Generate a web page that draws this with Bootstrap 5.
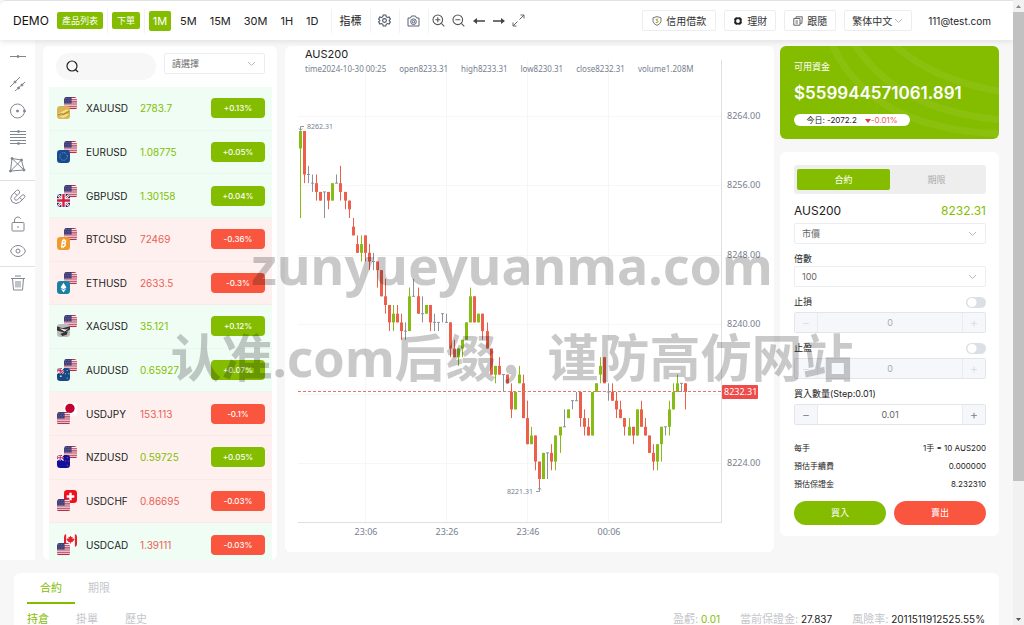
<!DOCTYPE html>
<html lang="zh-Hant">
<head>
<meta charset="utf-8">
<meta name="viewport" content="width=device-width, initial-scale=1">
<title>DEMO</title>
<link href="https://cdn.jsdelivr.net/npm/bootstrap@5.3.0/dist/css/bootstrap.min.css" rel="stylesheet">
<style>
  :root { --up:#84bd00; --down:#f9553f; --muted:#a9abb0; --rule:#ebedf0; }
  body { font-family:Inter,"Noto Sans CJK TC",sans-serif; font-size:10px; line-height:16px; color:#222; background:#f7f7f7; }
  button { font-family:inherit; }
  svg { flex:none; }
  .c-up { color:var(--up); } .c-down { color:#ea6153; } .c-muted { color:#c4c6ca; }
  .bg-up { background:var(--up); } .bg-down { background:var(--down); }
  .page-view { min-width:0; border-top:1px solid #e2e2e2; border-top-left-radius:6px; }
  .scroll-track { width:11px; background:#f1f1f1; }
  .scroll-thumb { height:75%; background:#c1c1c1; }
  .topbar { height:39px; background:#fff; box-shadow:0 1px 6px #dedede; padding:0 22px 0 13px; }
  .brand-name { font-size:12px; color:#111; width:44px; }
  .tag-btn { background:var(--up); color:#fff; border:0; border-radius:2px; height:17px; line-height:17px; padding:0 5px; font-size:9px; }
  .sep { width:1px; height:24px; background:#f1f2f4; margin:0 4px; }
  .tf { border:0; background:none; font-size:11px; padding:0 4px; height:20px; color:#222; text-align:center; }
  .tf.on { background:var(--up); color:#fff; border-radius:2px; width:22px; }
  .frames { gap:5px; margin-left:5px; }
  .icon-btn { border:0; background:none; padding:0; width:20px; height:20px; display:flex; align-items:center; justify-content:center; color:#555; }
  .out-btn { border:1px solid var(--rule); border-radius:2px; background:#fff; height:21px; padding:0 9px; font-size:10px; display:flex; align-items:center; gap:4px; color:#333; white-space:nowrap; }
  .sel { appearance:none; border:1px solid var(--rule); border-radius:2px; background:#fff url("data:image/svg+xml,%3Csvg xmlns='http://www.w3.org/2000/svg' width='9' height='6'%3E%3Cpath d='M1 1l3.5 3.5L8 1' fill='none' stroke='%23b5b8be'/%3E%3C/svg%3E") no-repeat right 8px center; height:21px; padding:0 20px 0 7px; font-size:9px; color:#666; width:100%; }
  .topbar .sel { width:68px; font-size:10px; color:#333; padding:0 14px 0 7px; }
  .tools { width:35px; background:#fff; color:#80868f; padding-top:3px; }
  .tools .icon-btn { width:35px; height:27px; color:inherit; }
  .tools hr { width:100%; margin:2px 0; border-color:#dfe1e5; opacity:1; }
  .work { height:520px; }
  .panel { background:#fff; border-radius:6px; }
  .list-panel { width:234px; margin:6px 8px 0; overflow:hidden; padding:7px 5px 0 6px; }
  .list-tools { padding:0 3px 0 7px; }
  .search { width:100px; height:27px; border-radius:14px; background:#f7f7f7; padding-left:10px; }
  .search input { border:0; background:none; width:60px; outline:0; }
  .pairs { display:grid; grid-auto-rows:1fr; height:480px; margin-top:7px; }
  .pair { display:grid; grid-template-columns:29px 54px 1fr 54px; align-items:center; padding:0 7px 0 8px; border-bottom:1px solid rgba(0,0,0,.025); color:#222; text-decoration:none; }
  .pair.rise { background:#effdf5; } .pair.fall { background:#fff0f0; }
  .chg { color:#fff; border-radius:4px; height:20px; line-height:20px; font-size:8px; text-align:center; font-weight:500; }
  .chart-panel { min-width:0; margin:6px 6px 0 0; height:506px; }
  .chart-name { font-size:11px; left:20px; top:0; color:#222; }
  .ohlc { left:20px; top:15px; font:8px/16px "Noto Sans",sans-serif; color:#76808f; gap:13px; white-space:nowrap; }
  .plot text { font-family:"Noto Sans",sans-serif; fill:#76808f; }
  .side { width:219px; margin:6px 14px 0 0; }
  .funds { height:93px; background:var(--up); color:#fff; border-radius:6px; overflow:hidden; padding:12px 14px; }
  .balance { font-size:17px; line-height:20px; font-weight:600; margin-top:12px; }
  .today { height:12px; line-height:12px; width:116px; border-radius:6px; font-size:8px; background:#fff; color:#222; margin-top:11px; justify-content:center; }
  .order { margin-top:13px; padding:13px 13px 13px 14px; height:384px; }
  .seg { height:29px; background:#eee; border-radius:3px; padding:4px 3px; }
  .seg button { border:0; background:none; color:#aaa; flex:1; border-radius:2px; font-size:9px; padding:0; }
  .seg .on { background:var(--up); color:#fff; }
  .quote-line { font-size:12px; line-height:16px; margin:9px 0 4px; }
  .field-label { font-size:9px; line-height:14px; display:block; }
  .stepper { height:21px; border:1px solid #e2e5ea; border-radius:2px; background:#fff; overflow:hidden; margin-top:3px; }
  .stepper button { width:22px; border:0; background:#f5f7fa; color:#888c94; padding:0; font-size:12px; line-height:18px; }
  .stepper input { border:0; border-left:1px solid #e8ebf0; border-right:1px solid #e8ebf0; border-radius:0; flex:1; min-width:0; text-align:center; font-size:9px; color:#666; background:#fff; padding:0; }
  .stepper.off input { background:#f5f7fa; color:#a8abb2; } .stepper.off button { color:#dcdfe6; }
  .toggle { appearance:none; width:20px; height:11px; border-radius:6px; margin:0; background:#dcdfe6 radial-gradient(circle at 6px 50%,#fff 4px,transparent 5px); }
  .facts { font-size:8px; line-height:14px; }
  .acts { margin-top:10px; }
  .act { border:0; border-radius:12px; height:24px; color:#fff; flex:1; font-size:9px; padding:0; }
  .bottom { margin:13px 14px 0; padding:4px 14px 0 13px; height:120px; font-size:11px; line-height:14px; }
  .bottom a { text-decoration:none; }
  .main-tab { width:48px; height:27px; line-height:22px; text-align:center; }
  .main-tab.on { border-bottom:2px solid var(--up); }
  .sub-tab { width:49px; }
  .stats { font-size:10px; gap:20px; }
  .stats .c-muted { font-size:11px; }
  .wm { inset:0; top:219px; pointer-events:none; color:rgba(0,0,0,.21); font:bold 52px/92px "Noto Sans","Noto Sans CJK SC",sans-serif; text-align:center; white-space:nowrap; overflow:hidden; }
  .wm-zh { font-size:51px; }
</style>
</head>
<body class="vh-100 overflow-hidden">
<svg width="0" height="0" class="position-absolute" aria-hidden="true">
  <defs>
    <clipPath id="r"><rect width="12" height="12" rx="3"/></clipPath>
    <symbol id="us" viewBox="0 0 12 12"><g clip-path="url(#r)"><path fill="#f4eef0" d="M0 0h12v12H0z"/><path stroke="#b5304c" d="M0 .5h12M0 2.5h12M0 4.5h12M0 6.5h12M0 8.5h12M0 10.5h12"/><path fill="#3b3b78" d="M0 0h7v6H0z"/><path stroke="#aab" stroke-width=".5" stroke-dasharray=".6 .9" d="M.7 1.3h6M1.2 3h5.5M.7 4.7h6"/></g></symbol>
    <symbol id="xau" viewBox="0 0 12 12"><g clip-path="url(#r)"><path fill="#d9b553" d="M0 0h12v12H0z"/><path fill="#f3dc8a" d="M1 7l8-4 2 1-8 4zM2 10l7-3 2 1-5 3z"/><path fill="none" stroke="#8e6516" stroke-width=".7" d="M1 8l3-1 2 1 5-3"/></g></symbol>
    <symbol id="xag" viewBox="0 0 12 12"><g clip-path="url(#r)"><path fill="#bbb" d="M0 0h12v12H0z"/><path fill="#333" d="M0 2l5 2 7-2v3L7 8 0 6zM3 9l7-2-1 3-4 1z"/><path fill="#eee" d="M2 4l6 1 3-1-4 3z"/></g></symbol>
    <symbol id="eur" viewBox="0 0 12 12"><rect width="12" height="12" rx="3" fill="#174a94"/><circle cx="6" cy="6" r="3.5" fill="none" stroke="#a9b970" stroke-width=".8" stroke-dasharray=".8 1.03"/></symbol>
    <symbol id="gbp" viewBox="0 0 12 12"><g clip-path="url(#r)"><path fill="#1e2a78" d="M0 0h12v12H0z"/><path stroke="#fff" stroke-width="2" d="M0 0l12 12M12 0L0 12"/><path stroke="#d0213c" stroke-width=".7" d="M0 0l12 12M12 0L0 12"/><path stroke="#fff" stroke-width="4" d="M6 0v12M0 6h12"/><path stroke="#d0213c" stroke-width="2.2" d="M6 0v12M0 6h12"/></g></symbol>
    <symbol id="btc" viewBox="0 0 12 12"><rect width="12" height="12" rx="3" fill="#f19a2c"/><path fill="none" stroke="#fff" stroke-width="1.3" d="M5 3.200h1.800q1.400.2 1.100 1.300-.3 1.300-1.700 1.300H4.700h1.900q1.300.3 1 1.500Q7.300 8.800 5.900 8.800H3.800M5.300 3.200L4.200 8.800"/><path stroke="#fff" stroke-width=".8" d="M5.900 1.700l-.2 1.300M7.200 1.900L7 3.200M4.500 9l-.2 1.300M5.900 9l-.2 1.300"/></symbol>
    <symbol id="eth" viewBox="0 0 12 12"><rect width="12" height="12" rx="3" fill="#1c7fa6"/><path fill="#fff" d="M6 1.500L8.700 6 6 7.600 3.300 6zM3.300 6.800L6 8.400l2.700-1.600L6 10.500z"/></symbol>
    <symbol id="aud" viewBox="0 0 12 12"><g clip-path="url(#r)"><path fill="#164a85" d="M0 0h12v12H0z"/><path stroke="#fff" stroke-width="1.400" d="M0 0l6 5M6 0L0 5M3 0v5M0 2.500h6"/><path stroke="#d0213c" stroke-width=".9" d="M3 0v5M0 2.500h6M0 0l6 5"/><path fill="#fff" d="M3 7h1.200v1.200H3zM9 2h.8v.8H9zM10.500 5h.8v.8h-.8zM7.500 5h.8v.8h-.8zM9 9h.8v.8H9z"/></g></symbol>
    <symbol id="nzd" viewBox="0 0 12 12"><g clip-path="url(#r)"><path fill="#10109a" d="M0 0h12v12H0z"/><path stroke="#fff" stroke-width="1.200" d="M0 0l6 5M6 0L0 5M3 0v5M0 2.500h6"/><path stroke="#e0213c" stroke-width=".9" d="M3 0v5M0 2.500h6"/><path fill="#e44" d="M9 2h1v1H9zM10.500 5h1v1h-1zM7.500 5h1v1h-1zM9 9h1v1H9z"/></g></symbol>
    <symbol id="jpy" viewBox="0 0 12 12"><rect width="12" height="12" rx="3" fill="#fff"/><circle cx="5.500" cy="5" r="4.300" fill="#c3002f"/></symbol>
    <symbol id="chf" viewBox="0 0 12 12"><rect width="12" height="12" rx="3" fill="#f00f1c"/><path stroke="#fff" stroke-width="2.200" d="M6 2.500v7M2.500 6h7"/></symbol>
    <symbol id="cad" viewBox="0 0 12 12"><g clip-path="url(#r)"><path fill="#fff" d="M0 0h12v12H0z"/><path fill="#e8202a" d="M0 0h2v12H0zM10 0h2v12h-2zM6 1.500l1 1.500 1-.4-.3 2L9 4l.6 1.300L7.500 7.500H6.300V9h-.6V7.500H4.500L2.400 5.300 3 4l1.300.6-.3-2 1 .4z"/></g></symbol>
  </defs>
</svg>
<div class="d-flex h-100">
<div class="page-view flex-grow-1 overflow-hidden">
  <header class="topbar d-flex align-items-center position-relative">
    <span class="brand-name">DEMO</span>
    <button class="tag-btn">產品列表</button><span class="sep"></span>
    <button class="tag-btn">下單</button><span class="sep"></span>
    <button class="tf on p-0">1M</button>
    <div class="frames d-flex">
      <button class="tf">5M</button>
      <button class="tf">15M</button>
      <button class="tf">30M</button>
      <button class="tf">1H</button>
      <button class="tf">1D</button>
    </div>
    <span class="sep ms-2"></span>
    <button class="tf">指標</button><span class="sep ms-1 me-0"></span>
    <button class="icon-btn ms-1" aria-label="設置"><svg width="13" height="13" viewBox="0 0 13 13" fill="none" stroke="#4c5566" stroke-width="1.100"><path d="M5.200 1h2.600l.4 1.600 1.300.8 1.600-.5 1.300 2.200-1.200 1.100v.6l1.200 1.100-1.300 2.200-1.600-.5-1.300.8-.4 1.600H5.200l-.4-1.600-1.300-.8-1.600.5L.6 7.900l1.200-1.100v-.6L.6 5.100l1.300-2.200 1.600.5 1.300-.8z"/><circle cx="6.500" cy="6.500" r="1.900"/></svg></button>
    <span class="sep ms-1"></span>
    <button class="icon-btn" aria-label="截圖"><svg width="13" height="12" viewBox="0 0 13 12" fill="none" stroke="#566176"><path d="M1 3h2.500L4.500 1h4l1 2H12v8H1z"/><circle cx="6.500" cy="6.700" r="2.800"/><circle cx="6.500" cy="6.700" r="1.200"/></svg></button>
    <span class="sep me-0"></span>
    <button class="icon-btn" aria-label="放大"><svg width="13" height="13" viewBox="0 0 13 13" fill="none" stroke="#555" stroke-width="1.100"><circle cx="5.800" cy="5.800" r="4.800"/><path d="M9.300 9.300l3 3M3.300 5.800h5M5.800 3.300v5"/></svg></button>
    <button class="icon-btn" aria-label="縮小"><svg width="13" height="13" viewBox="0 0 13 13" fill="none" stroke="#555" stroke-width="1.100"><circle cx="5.800" cy="5.800" r="4.800"/><path d="M9.300 9.300l3 3M3.300 5.800h5"/></svg></button>
    <button class="icon-btn" aria-label="向左"><svg width="12" height="8" viewBox="0 0 12 8"><path fill="#444" d="M0 4l4-3v2.300h8v1.400H4V7z"/></svg></button>
    <button class="icon-btn" aria-label="向右"><svg width="12" height="8" viewBox="0 0 12 8"><path fill="#444" d="M12 4L8 1v2.300H0v1.400h8V7z"/></svg></button>
    <button class="icon-btn" aria-label="全屏"><svg width="13" height="13" viewBox="0 0 13 13" fill="none" stroke="#666"><path d="M8.500 1H12v3.500M12 1L7.500 5.500M4.500 12H1V8.500M1 12l4.500-4.500"/></svg></button>
    <div class="d-flex align-items-center ms-auto gap-2">
      <button class="out-btn"><svg width="10" height="10" viewBox="0 0 10 10" fill="none" stroke="#777"><path d="M5 .6l4 1.200v3.500Q8.500 8 5 9.400 1.500 8 1 5.300V1.800z"/><path stroke="#b5a12d" d="M6.300 3.200Q4 2.500 4 4q2.500.8 2.200 2-.8 1-2.500.4"/></svg>信用借款</button>
      <button class="out-btn px-2"><svg width="10" height="10" viewBox="0 0 10 10"><circle cx="5" cy="5" r="3" fill="none" stroke="#222" stroke-width="2.200"/><path stroke="#fff" d="M5 0v2M5 8v2M0 5h2M8 5h2" stroke-width=".7"/></svg>理財</button>
      <button class="out-btn px-2"><svg width="10" height="10" viewBox="0 0 10 10" fill="none" stroke="#666"><path d="M3 2.500V.8h6.300l-.5 6.500H7M.8 2.500H7v6.700H.8zM2.500 5H5M2.500 7H5"/></svg>跟隨</button>
      <select class="sel" aria-label="語言"><option>繁体中文</option></select>
      <a href="#" class="text-dark text-decoration-none ms-2">111@test.com</a>
    </div>
  </header>

  <div class="work d-flex align-items-start">
    <nav class="tools h-100 d-flex flex-column" aria-label="繪圖工具">
      <button class="icon-btn" aria-label="水平線"><svg width="16" height="16" viewBox="0 0 16 16" stroke="currentColor"><path d="M0 7.500h16"/><circle cx="8" cy="7.500" r="1" fill="currentColor"/></svg></button>
      <button class="icon-btn" aria-label="平行線"><svg width="16" height="16" viewBox="0 0 16 16" stroke="currentColor" fill="currentColor"><path d="M0 11L10 1M5 15L15 6"/><circle cx="5" cy="6" r="1"/><circle cx="8.500" cy="12" r="1"/><circle cx="12" cy="9" r="1"/></svg></button>
      <button class="icon-btn" aria-label="圓形"><svg width="16" height="16" viewBox="0 0 16 16" stroke="currentColor" fill="none"><circle cx="7.500" cy="8" r="7"/><circle cx="7.500" cy="8" r="1" fill="currentColor"/><circle cx="14.500" cy="8" r="1" fill="currentColor"/></svg></button>
      <button class="icon-btn" aria-label="斐波那契"><svg width="16" height="16" viewBox="0 0 16 16" stroke="currentColor" fill="currentColor"><path d="M0 1.500h16M0 4.500h16M0 7.500h16M0 10.500h16M0 13.500h16"/><circle cx="8.500" cy="1.500" r="1"/><circle cx="8.500" cy="13.500" r="1"/></svg></button>
      <button class="icon-btn" aria-label="形態"><svg width="17" height="16" viewBox="0 0 17 16" stroke="currentColor" fill="none"><path d="M3 1.500L1.500 14 15 13 12.500 3zM3 1.500L15 13M12.500 3L1.500 14"/><g fill="currentColor"><circle cx="3" cy="1.500" r="1"/><circle cx="1.500" cy="14" r="1"/><circle cx="15" cy="13" r="1"/><circle cx="12.500" cy="3" r="1"/></g></svg></button>
      <hr>
      <button class="icon-btn" aria-label="磁吸"><svg width="16" height="16" viewBox="0 0 16 16" stroke="currentColor" fill="none"><path d="M6.500 1.500L2 6Q-.8 9.500 2.200 13 6 16 9.500 13.300L14.500 8.500Q15.500 7 14.300 6.200 13.200 5.300 12 6.300L7.500 10.700Q6 11.700 5 10.800 4 9.700 5 8.500L9.500 4Q10 2.500 9 1.500 7.700.5 6.500 1.500zM4.300 3.800l2.700 2.500M9.800 8.500l2.300 2.300"/></svg></button>
      <button class="icon-btn" aria-label="鎖定"><svg width="14" height="16" viewBox="0 0 14 16" stroke="currentColor" fill="none"><rect x="1" y="6.500" width="12" height="8.500" rx="1"/><path d="M3.500 6.500V4Q4 1 6.800 1q2 0 3 1.700M7 10v2"/></svg></button>
      <button class="icon-btn" aria-label="顯示"><svg width="16" height="14" viewBox="0 0 16 14" stroke="currentColor" fill="none"><path d="M.5 7Q3 1.500 8 1.500T15.500 7Q13 12.500 8 12.500T.5 7z"/><circle cx="8" cy="7" r="2"/></svg></button>
      <hr>
      <button class="icon-btn" aria-label="刪除"><svg width="16" height="16" viewBox="0 0 16 16" stroke="currentColor" fill="none"><path d="M1 3.500h14M5 1h6M2.500 3.500L3.500 15h9l1-11.500M6 6v6.500M8 6v6.500M10 6v6.500"/></svg></button>
    </nav>

    <section class="panel list-panel align-self-stretch flex-shrink-0">
      <div class="list-tools d-flex align-items-start">
        <label class="search d-flex align-items-center"><svg width="13" height="13" viewBox="0 0 13 13" fill="none" stroke="#222" stroke-width="1.200"><circle cx="6" cy="6" r="5"/><path d="M9.500 9.500l2.500 2.500"/></svg><input type="text" aria-label="搜索"></label>
        <div class="flex-grow-1 ps-2 pe-1"><select class="sel c-muted" aria-label="分類"><option>請選擇</option></select></div>
      </div>
      <div class="pairs" id="pairs"></div>
    </section>

    <section class="panel chart-panel flex-grow-1 position-relative">
      <div class="position-absolute chart-name">AUS200</div>
      <div class="position-absolute ohlc d-flex"><span>time2024-10-30 00:25</span><span>open8233.31</span><span>high8233.31</span><span>low8230.31</span><span>close8232.31</span><span>volume1.208M</span></div>
      <svg class="plot w-100 d-block" viewBox="0 0 489 506" id="plot"></svg>
    </section>

    <aside class="side flex-shrink-0">
      <div class="funds position-relative">
        <svg class="position-absolute top-0 end-0" width="180" height="93" viewBox="0 0 180 93" fill="none" stroke="#fff" stroke-opacity=".06" stroke-width="7"><path d="M12-4Q50 84 184 88M33-6Q76 66 186 74M68-8Q110 35 186 46"/></svg>
        <div class="position-relative">
          <div class="field-label mt-1 lh-1">可用資金</div>
          <div class="balance">$559944571061.891</div>
          <div class="today d-flex gap-2"><span>今日: -2072.2</span><span class="c-down"><svg width="6" height="4" viewBox="0 0 6 4"><path fill="#e23b3b" d="M0 0h6L3 4z"/></svg>-0.01%</span></div>
        </div>
      </div>
      <form class="panel order">
        <div class="seg d-flex"><button type="button" class="on">合約</button><button type="button">期限</button></div>
        <div class="quote-line d-flex justify-content-between"><span>AUS200</span><span class="c-up">8232.31</span></div>
        <select class="sel" aria-label="類型"><option>市價</option></select>
        <label class="field-label mt-1 pt-1" for="lev">倍數</label>
        <select class="sel" id="lev"><option>100</option></select>
        <div class="d-flex justify-content-between align-items-center mt-2"><label class="field-label" for="sl">止損</label><input type="checkbox" class="toggle" id="sl"></div>
        <div class="stepper off d-flex"><button type="button" disabled>−</button><input type="text" value="0" disabled aria-label="止損價"><button type="button" disabled>+</button></div>
        <div class="d-flex justify-content-between align-items-center mt-2"><label class="field-label" for="tp">止盈</label><input type="checkbox" class="toggle" id="tp"></div>
        <div class="stepper off d-flex"><button type="button" disabled>−</button><input type="text" value="0" disabled aria-label="止盈價"><button type="button" disabled>+</button></div>
        <label class="field-label mt-2" for="qty">買入數量(Step:0.01)</label>
        <div class="stepper d-flex"><button type="button">−</button><input type="text" value="0.01" id="qty"><button type="button">+</button></div>
        <div class="facts d-grid gap-1 mt-3">
          <div class="d-flex justify-content-between"><span>每手</span><span>1手 = 10 AUS200</span></div>
          <div class="d-flex justify-content-between"><span>預估手續費</span><span>0.000000</span></div>
          <div class="d-flex justify-content-between"><span>預估保證金</span><span>8.232310</span></div>
        </div>
        <div class="acts d-flex gap-2"><button type="button" class="act bg-up">買入</button><button type="button" class="act bg-down">賣出</button></div>
      </form>
    </aside>
  </div>

  <section class="panel bottom">
    <nav class="d-flex"><a href="#" class="main-tab on c-up">合約</a><a href="#" class="main-tab c-muted">期限</a></nav>
    <div class="d-flex align-items-center mt-1 pt-1">
      <a href="#" class="sub-tab c-up">持倉</a><a href="#" class="sub-tab c-muted">掛單</a><a href="#" class="sub-tab c-muted">歷史</a>
      <div class="stats d-flex ms-auto"><span><span class="c-muted">盈虧:</span> <span class="c-up">0.01</span></span><span><span class="c-muted">當前保證金:</span> 27.837</span><span><span class="c-muted">風險率:</span> 2011511912525.55%</span></div>
    </div>
  </section>
</div>
<div class="scroll-track d-flex flex-column align-items-center flex-shrink-0" aria-hidden="true">
  <svg width="11" height="12" viewBox="0 0 11 12"><path fill="#888" d="M3 8l2.500-3L8 8z"/></svg>
  <div class="scroll-thumb w-100"></div>
  <svg class="mt-auto" width="11" height="12" viewBox="0 0 11 12"><path fill="#555" d="M3 5l2.500 3L8 5z"/></svg>
</div>
</div>
<div class="wm position-absolute" lang="zh-Hans"><div>zunyueyuanma.com</div><div class="wm-zh">认准.com后缀，谨防高仿网站</div></div>
<script src="https://cdn.jsdelivr.net/npm/bootstrap@5.3.0/dist/js/bootstrap.bundle.min.js"></script>
<script>
  // symbol, price, change, row tint, back icon, front icon
  const pairs = [
    ['XAUUSD','2783.7','+0.13%','rise','us','xau'],
    ['EURUSD','1.08775','+0.05%','rise','us','eur'],
    ['GBPUSD','1.30158','+0.04%','rise','us','gbp'],
    ['BTCUSD','72469','-0.36%','fall','us','btc'],
    ['ETHUSD','2633.5','-0.3%','fall','us','eth'],
    ['XAGUSD','35.121','+0.12%','rise','us','xag'],
    ['AUDUSD','0.65927','+0.07%','rise','us','aud'],
    ['USDJPY','153.113','-0.1%','fall','jpy','us'],
    ['NZDUSD','0.59725','+0.05%','fall','us','nzd'],
    ['USDCHF','0.86695','-0.03%','fall','chf','us'],
    ['USDCAD','1.39111','-0.03%','rise','cad','us']
  ];
  document.getElementById('pairs').innerHTML = pairs.map(([s,p,c,t,a,b]) => {
    const k = c[0] === '+' ? 'up' : 'down';
    return `<a href="#" class="pair ${t}"><svg width="20" height="22" viewBox="0 0 20 22"><use href="#${a}" x="7" y="0" width="13" height="13"/><use href="#${b}" x="0" y="9" width="13" height="13"/></svg><span>${s}</span><span class="c-${k}">${p}</span><span class="chg bg-${k}">${c}</span></a>`;
  }).join('');

  // body top, body bottom, high, low in points below 8262.31, then direction
  const candles = `0 2 0 10 g|0 5 0 6 r|5 5 4 6 n|6 6 5 7 n|6 7 5 8 r|7 8 7 8 r|7 7 7 10 n|7 8 7 9 r|6 8 6 8 g|6 6 5 6 n|6 7 4 8 r|7 8 7 9 r|8 9 8 10 r|11 12 10 12 r|13 14 12 14 r|13 14 12 15 g|12 14 12 15 r|14 15 13 16 r|15 15 14 16 n|15 16 15 18 r|16 19 16 19 r|19 20 17 21 r|20 22 20 23 r|21 22 20 23 g|21 22 20 22 r|22 23 21 24 r|23 23 22 24 n|19 23 18 23 g|19 19 17 19 n|19 21 18 21 r|21 21 19 22 n|20 21 20 21 g|20 22 20 23 r|22 22 21 23 n|22 22 22 23 n|21 21 21 22 n|22 22 21 22 n|22 25 22 26 r|25 26 24 26 r|25 26 25 27 g|24 25 24 26 g|22 24 22 24 g|19 22 18 22 g|19 22 19 22 r|21 22 21 22 g|21 23 21 24 r|23 25 22 25 r|25 28 25 28 r|27 28 27 29 g|27 28 26 28 r|28 28 28 30 n|28 29 28 29 r|30 32 29 33 r|30 32 30 32 g|28 29 27 29 g|29 33 28 33 r|33 36 31 36 r|35 36 34 36 g|35 38 35 39 r|38 40 38 41 r|37 40 37 40 g|37 37 37 40 n|37 38 36 39 r|35 38 35 39 g|34 35 34 37 g|34 34 32 34 n|32 33 32 33 g|31 31 31 32 n|31 31 30 31 n|30 33 30 34 r|33 34 32 35 r|34 35 33 35 r|30 35 30 35 g|29 30 29 30 g|27 28 26 29 g|26 29 26 29 r|30 30 29 31 n|30 31 29 31 r|31 32 30 33 r|32 33 31 33 r|33 34 33 35 r|34 35 33 35 g|34 35 34 36 r|32 35 32 35 g|32 34 31 34 r|34 35 33 35 r|35 37 35 37 r|37 38 36 39 r|36 38 36 39 g|34 36 34 38 g|34 34 34 35 n|32 34 31 35 g|30 32 29 32 g|29 30 28 30 g|29 29 29 30 n|29 30 29 32 r`.split('|');
  const ink = { g:'#86bc15', r:'#ec5f4b', n:'#8c929c' };
  const yAt = k => 85 + 8.7 * k;
  let out = '';
  [['8264.00',70],['8256.00',139],['8248.00',209],['8240.00',278],['',348],['8224.00',417]].forEach(([t,y]) => {
    out += `<path d="M13 ${y+.5}H437" stroke="#f6f6f6"/><text x="442" y="${y+3}" font-size="9">${t}</text>`;
  });
  [['23:06',81],['23:26',162],['23:46',243],['00:06',324]].forEach(([t,x]) => {
    out += `<path d="M${x-.5} 14V477" stroke="#f6f6f6"/><text x="${x}" y="489" font-size="9" text-anchor="middle">${t}</text>`;
  });
  out += '<path d="M436.500 14V477M13 476.500H437" stroke="#dfdfe1" fill="none"/>';
  candles.forEach((row, i) => {
    const [o,c,h,l,d] = row.split(' '), x = Math.floor(15.4 + 4.057 * i) + .5;
    out += `<path d="M${x} ${yAt(h)}V${yAt(l)}" stroke="${ink[d]}"/>`;
    out += d === 'n' ? `<path d="M${x-1.5} ${yAt(o)}h3" stroke="${ink.n}"/>`
                     : `<rect x="${x-1.5}" y="${yAt(o)}" width="3" height="${yAt(c)-yAt(o)}" fill="${ink[d]}"/>`;
  });
  out += `<path d="M13 345.500H436" stroke="#e0796c" stroke-dasharray="3 2"/>
    <rect x="437" y="339" width="36" height="14" rx="1" fill="#ee4b4b"/><text x="439" y="349" font-size="9" style="fill:#fff">8232.31</text>
    <path d="M19 80.500h-3.500V84M14 82.500l1.500 2 1.500-2" fill="none" stroke="#76808f" stroke-width=".8"/><text x="22" y="83" font-size="7">8262.31</text>
    <path d="M251 445.500h3.500V442M253 443.500l1.500-2 1.500 2" fill="none" stroke="#76808f" stroke-width=".8"/><text x="248" y="448" font-size="7" text-anchor="end">8221.31</text>`;
  document.getElementById('plot').innerHTML = out;
</script>
</body>
</html>
